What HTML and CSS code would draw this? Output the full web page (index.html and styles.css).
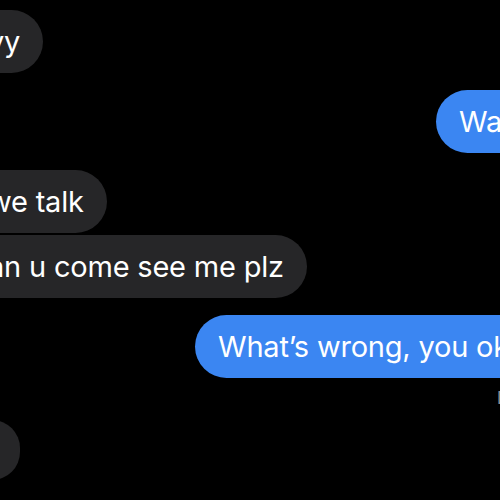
FILE: index.html
```html
<!DOCTYPE html>
<html lang="en">
<head>
    <meta charset="UTF-8">
    <meta name="viewport" content="width=device-width, initial-scale=1.0">
    <title>Messages</title>
    <link rel="stylesheet" href="styles.css">
</head>
<body>
    <div class="thread">
        <div class="bubble in">vy</div>
        <div class="bubble out out-short">Wait</div>
        <div class="bubble in">we talk</div>
        <div class="bubble in next">an u come see me plz</div>
        <div class="bubble out out-long">What’s wrong, you ok?</div>
        <div class="status">Delivered</div>
        <div class="bubble in last">ok</div>
    </div>
</body>
</html>
```

FILE: styles.css
```css
body {
    margin: 0;
    background-color: #000;
    overflow: hidden;
    font-family: Inter, "Noto Sans", sans-serif;
}
.thread {
    display: flex;
    flex-direction: column;
    align-items: flex-start;
    padding-top: 10px;
}
.bubble {
    padding: 14px 23px;
    font-size: 29px;
    line-height: 35px;
    letter-spacing: -0.2px;
    color: #fff;
    border-radius: 32px;
    white-space: nowrap;
    margin-top: 17px;
}
.bubble:first-child {
    margin-top: 0;
}
.in {
    background-color: #262628;
    margin-left: -40px;
    padding-left: 28px;
}
.in.next {
    margin-top: 2px;
}
.out {
    background-color: #3b86f2;
}
.out-short {
    margin-left: 436px;
}
.out-long {
    margin-left: 195px;
}
.status {
    margin: 10px 0 0 497px;
    font-size: 17px;
    line-height: 20px;
    color: #8e8e93;
    white-space: nowrap;
}
/* bubble whose text is past the left edge */
.in.last {
    margin-top: 12px;
    margin-left: -36px;
    padding-left: 0;
    padding-top: 13px;
    padding-bottom: 12px;
}
```
